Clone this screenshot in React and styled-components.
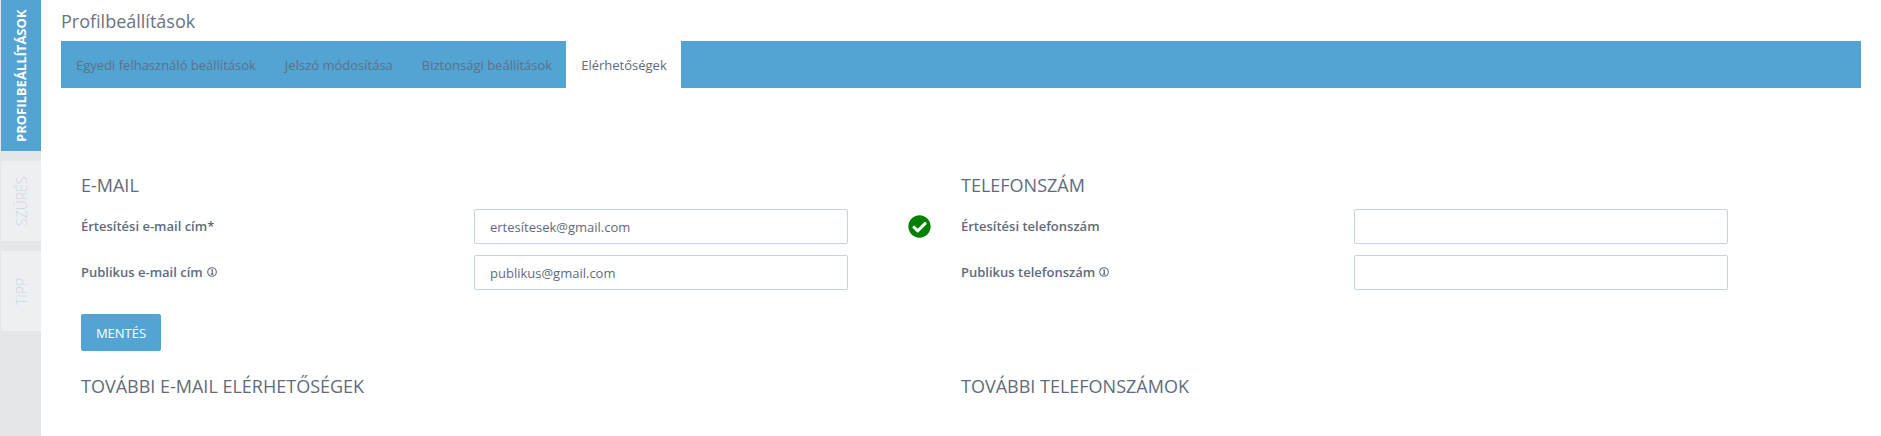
import React from 'react'
import styled, { createGlobalStyle } from 'styled-components'
import { FaCheckCircle } from 'react-icons/fa'

const GlobalStyle = createGlobalStyle`
  html, body {
    margin: 0;
    padding: 0;
    background: #fff;
    font-family: "Open Sans", "Liberation Sans", sans-serif;
    color: #5f6b7c;
  }
`
const Page = styled.div`
  display: flex;
  height: 436px;
  overflow: hidden;
`
const Side = styled.aside`
  width: 40px;
  padding-left: 1px;
  flex-shrink: 0;
  background: #e4e7ea;
  display: flex;
  flex-direction: column;
  gap: 10px;
`
const SideTab = styled.div`
  height: ${p => p.$h}px;
  background: ${p => (p.$active ? '#53a4d3' : '#edf0f3')};
  color: ${p => (p.$active ? '#fff' : '#d0d4d9')};
  font-size: ${p => (p.$active ? 13 : 14)}px;
  font-weight: ${p => (p.$active ? 700 : 300)};
  display: flex;
  align-items: center;
  justify-content: center;
  writing-mode: vertical-rl;
  transform: rotate(180deg);
  white-space: nowrap;
`
const Main = styled.main`
  flex: 1;
  padding: 0 20px 0 20px;
  min-width: 0;
`
const Title = styled.h1`
  margin: 0;
  height: 41px;
  line-height: 43px;
  font-size: 18px;
  font-weight: 400;
  color: #6a7482;
`
const TabBar = styled.nav`
  display: flex;
  height: 47px;
  background: #53a4d3;
`
const Tab = styled.a`
  display: flex;
  align-items: center;
  padding: ${p => (p.$active ? '0 14px 0 15px' : '0 14px 0 15px')};
  font-size: 13px;
  color: ${p => (p.$active ? '#5f6b7c' : '#5c7186')};
  background: ${p => (p.$active ? '#fff' : 'transparent')};
`
const Columns = styled.div`
  display: grid;
  grid-template-columns: 880px 1fr;
  padding: 86px 0 0 20px;
`
const Column = styled.section`
  display: flex;
  flex-direction: column;
`
const Heading = styled.h2`
  margin: 0;
  font-size: 18px;
  line-height: 22px;
  font-weight: 400;
  color: #5f6b7c;
  text-transform: uppercase;
`
const Fields = styled.div`
  display: flex;
  flex-direction: column;
  gap: 11px;
  margin-top: 13px;
`
const Row = styled.div`
  display: flex;
  align-items: center;
  height: 35px;
`
const Label = styled.label`
  width: 393px;
  flex-shrink: 0;
  padding-bottom: 2px;
  font-size: 13px;
  font-weight: 600;
  color: #5f6b7c;
  display: flex;
  align-items: center;
  gap: 4px;
`
const Input = styled.input`
  box-sizing: border-box;
  width: 374px;
  height: 35px;
  padding: 0 15px;
  border: 1px solid #c5d3e0;
  border-radius: 2px;
  font: 13px "Open Sans", sans-serif;
  color: #5f6b7c;
  outline: none;
`
const Status = styled(FaCheckCircle)`
  margin-left: 60px;
  width: 23px;
  height: 23px;
  color: #008000;
`
const SaveButton = styled.button`
  align-self: flex-start;
  box-sizing: border-box;
  width: 80px;
  height: 37px;
  margin-top: 24px;
  border: 0;
  border-radius: 2px;
  background: #53a4d3;
  color: #fff;
  font: 13px "Open Sans", sans-serif;
`
const SubHeading = styled(Heading)`
  margin-top: ${p => p.$top}px;
`

const InfoIcon = () => (
  <svg width="10" height="10" viewBox="0 0 10 10" fill="none" stroke="#5f6b7c">
    <circle cx="5" cy="5" r="4.3" strokeWidth="1.1" />
    <path d="M3.9 3h1.4v4M3.7 7.2h2.8" strokeWidth="1.2" />
  </svg>
)

function App() {
  return (
    <Page>
      <GlobalStyle />
      <Side>
        <SideTab $active $h={151}>PROFILBEÁLLÍTÁSOK</SideTab>
        <SideTab $h={80}>SZŰRÉS</SideTab>
        <SideTab $h={80}>TIPP</SideTab>
      </Side>
      <Main>
        <Title>Profilbeállítások</Title>
        <TabBar>
          <Tab>Egyedi felhasználó beállítások</Tab>
          <Tab>Jelszó módosítása</Tab>
          <Tab>Biztonsági beállítások</Tab>
          <Tab $active>Elérhetőségek</Tab>
        </TabBar>
        <Columns>
          <Column>
            <Heading>E-mail</Heading>
            <Fields>
              <Row>
                <Label>Értesítési e-mail cím*</Label>
                <Input defaultValue="ertesítesek@gmail.com" />
                <Status />
              </Row>
              <Row>
                <Label>Publikus e-mail cím <InfoIcon /></Label>
                <Input defaultValue="publikus@gmail.com" />
              </Row>
            </Fields>
            <SaveButton>MENTÉS</SaveButton>
            <SubHeading $top={24}>További e-mail elérhetőségek</SubHeading>
          </Column>
          <Column>
            <Heading>Telefonszám</Heading>
            <Fields>
              <Row>
                <Label>Értesítési telefonszám</Label>
                <Input />
              </Row>
              <Row>
                <Label>Publikus telefonszám <InfoIcon /></Label>
                <Input />
              </Row>
            </Fields>
            <SubHeading $top={85}>További telefonszámok</SubHeading>
          </Column>
        </Columns>
      </Main>
    </Page>
  )
}

export default App
